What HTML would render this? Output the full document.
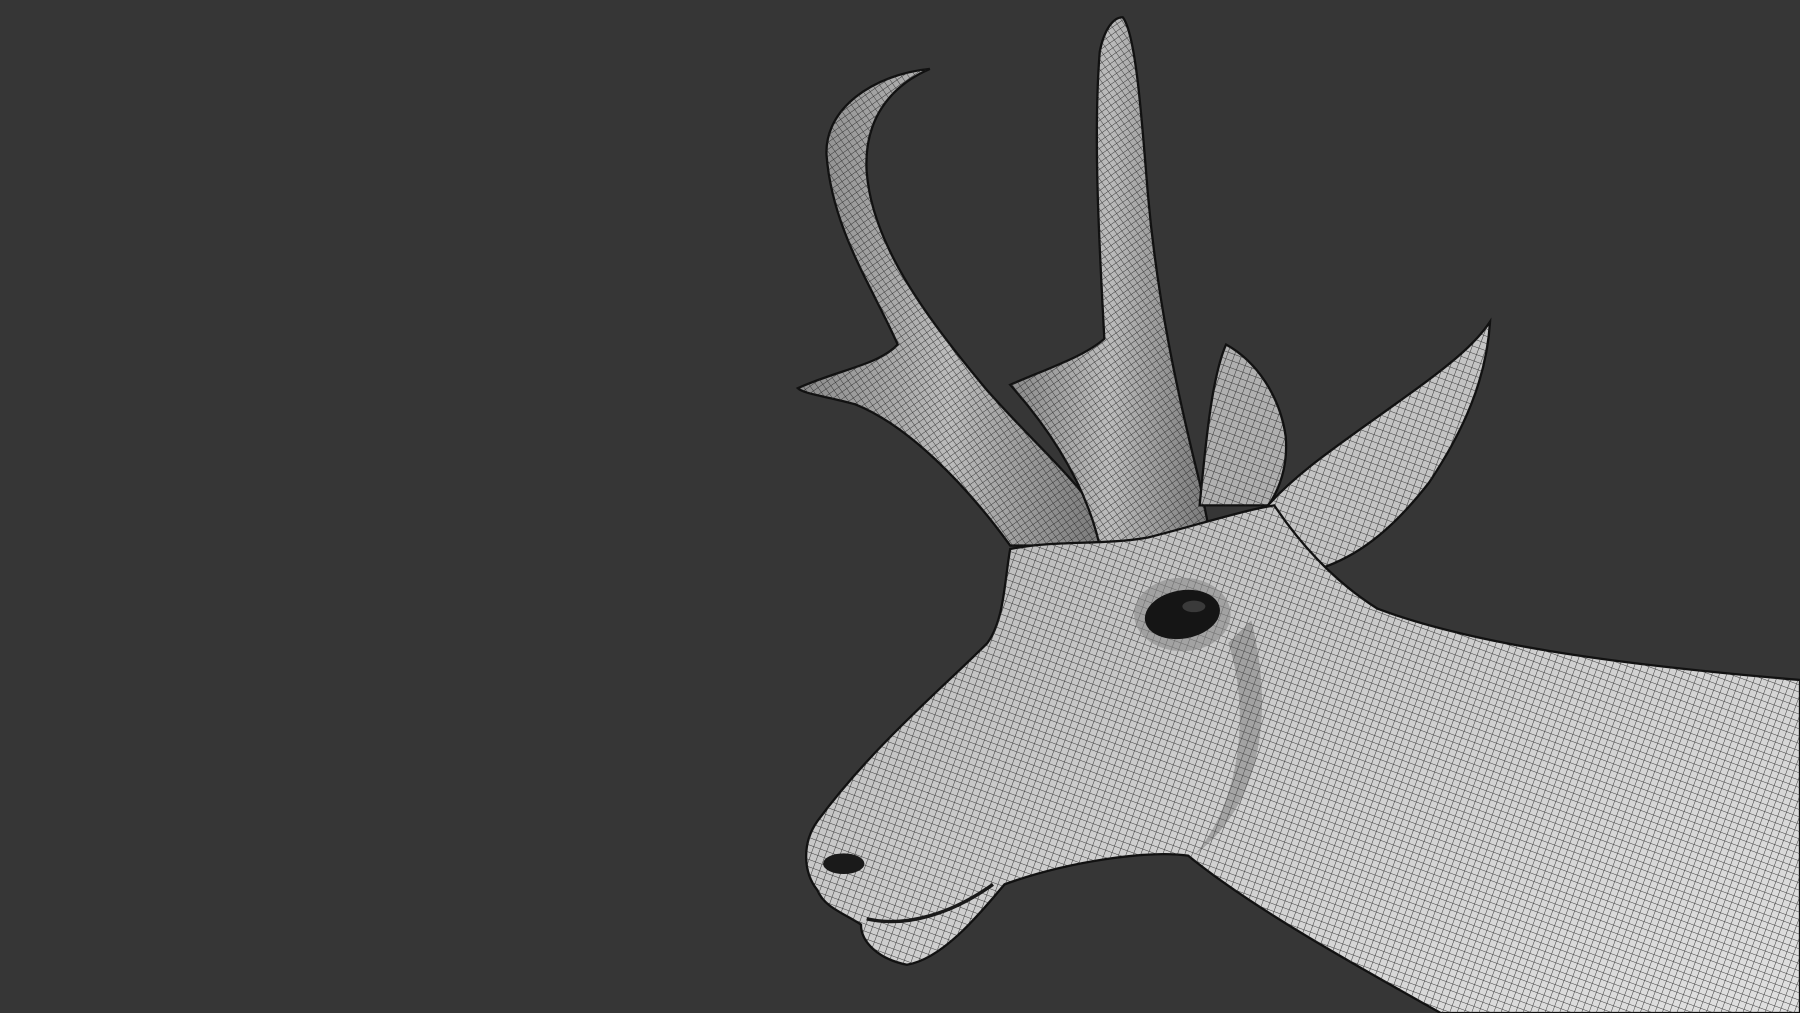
<!DOCTYPE html>
<html><head><meta charset="utf-8"><style>
html,body{margin:0;padding:0;background:#363636;width:1800px;height:1013px;overflow:hidden}
svg{display:block}
</style></head><body>
<svg width="1800" height="1013" viewBox="0 0 1568 882" preserveAspectRatio="none" xmlns="http://www.w3.org/2000/svg">
<defs>
<pattern id="g" width="6" height="6" patternUnits="userSpaceOnUse" patternTransform="rotate(20)">
<path d="M0 0H6M0 0V6" stroke="#222" stroke-width="0.9" fill="none" opacity="0.85"/>
</pattern>
<pattern id="g2" width="5" height="5" patternUnits="userSpaceOnUse" patternTransform="rotate(-35)">
<path d="M0 0H5M0 0V5" stroke="#222" stroke-width="0.8" fill="none" opacity="0.85"/>
</pattern>
<linearGradient id="body" x1="0" y1="0" x2="1" y2="1">
<stop offset="0" stop-color="#b8b8b8"/><stop offset="0.5" stop-color="#cfcfcf"/><stop offset="1" stop-color="#e0e0e0"/>
</linearGradient>
<linearGradient id="horn" x1="0" y1="0" x2="1" y2="0">
<stop offset="0" stop-color="#8a8a8a"/><stop offset="0.5" stop-color="#bcbcbc"/><stop offset="1" stop-color="#7a7a7a"/>
</linearGradient>
</defs>
<g stroke="#111" stroke-width="2">
<path d="M880 475 C840 420 790 370 745 352 C720 345 700 343 695 338 C730 322 765 318 782 300 C760 250 725 200 720 135 C718 95 760 65 810 60 C775 75 752 105 755 150 C760 215 810 280 860 340 C900 385 930 410 955 445 L960 475 Z" fill="url(#horn)"/>
<path d="M880 475 C840 420 790 370 745 352 C720 345 700 343 695 338 C730 322 765 318 782 300 C760 250 725 200 720 135 C718 95 760 65 810 60 C775 75 752 105 755 150 C760 215 810 280 860 340 C900 385 930 410 955 445 L960 475 Z" fill="url(#g2)" stroke="none"/>
<path d="M960 485 C950 430 920 380 880 335 C915 320 945 310 962 295 C958 220 952 120 958 45 C962 25 970 15 978 15 C990 30 995 110 1000 170 C1008 260 1025 340 1045 420 L1052 455 Z" fill="url(#horn)"/>
<path d="M960 485 C950 430 920 380 880 335 C915 320 945 310 962 295 C958 220 952 120 958 45 C962 25 970 15 978 15 C990 30 995 110 1000 170 C1008 260 1025 340 1045 420 L1052 455 Z" fill="url(#g2)" stroke="none"/>
<path d="M1045 440 C1050 390 1055 330 1068 300 C1095 315 1115 345 1120 380 C1122 405 1115 425 1105 440 Z" fill="#b0b0b0"/>
<path d="M1045 440 C1050 390 1055 330 1068 300 C1095 315 1115 345 1120 380 C1122 405 1115 425 1105 440 Z" fill="url(#g)" stroke="none"/>
<path d="M1100 445 C1130 410 1170 385 1225 345 C1260 320 1285 300 1298 280 C1295 330 1275 375 1245 420 C1210 465 1180 485 1150 495 Z" fill="#c4c4c4"/>
<path d="M1100 445 C1130 410 1170 385 1225 345 C1260 320 1285 300 1298 280 C1295 330 1275 375 1245 420 C1210 465 1180 485 1150 495 Z" fill="url(#g)" stroke="none"/>
<path d="M880 478 C920 470 960 475 1000 468 C1040 458 1080 445 1110 440 C1130 470 1160 505 1200 530 C1280 560 1400 578 1568 592 L1568 882 L1255 882 C1180 840 1090 790 1035 745 C1000 740 930 750 875 770 C850 800 820 835 790 840 C765 835 750 820 750 805 C735 795 718 790 712 775 C700 760 698 735 712 715 C760 650 820 600 860 560 C875 540 875 505 880 478 Z" fill="url(#body)"/>
<path d="M880 478 C920 470 960 475 1000 468 C1040 458 1080 445 1110 440 C1130 470 1160 505 1200 530 C1280 560 1400 578 1568 592 L1568 882 L1255 882 C1180 840 1090 790 1035 745 C1000 740 930 750 875 770 C850 800 820 835 790 840 C765 835 750 820 750 805 C735 795 718 790 712 775 C700 760 698 735 712 715 C760 650 820 600 860 560 C875 540 875 505 880 478 Z" fill="url(#g)" stroke="none"/>
</g>
<path d="M1090 540 C1110 620 1100 700 1040 745 C1080 700 1090 620 1070 560 Z" fill="#555" opacity="0.35"/>
<ellipse cx="1030" cy="535" rx="42" ry="32" fill="#8a8a8a" opacity="0.6"/>
<ellipse cx="1030" cy="535" rx="33" ry="21" fill="#151515" transform="rotate(-10 1030 535)"/>
<ellipse cx="1040" cy="528" rx="10" ry="5" fill="#3a3a3a"/>
<ellipse cx="735" cy="752" rx="18" ry="9" fill="#1a1a1a"/>
<path d="M755 800 C790 808 830 795 865 770" stroke="#1a1a1a" stroke-width="3" fill="none"/>
</svg>
</body></html>
